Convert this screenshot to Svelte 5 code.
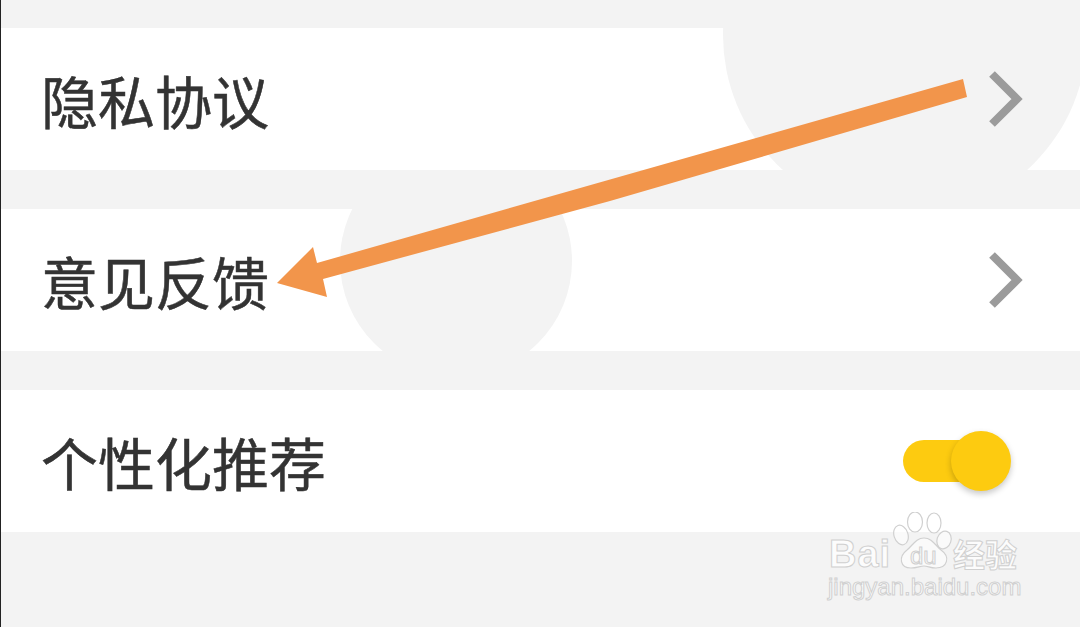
<script>
  const rows = [
    { label: '隐私协议', kind: 'link', circle: 'big' },
    { label: '意见反馈', kind: 'link', circle: 'small' },
    { label: '个性化推荐', kind: 'toggle' },
  ];
</script>

<div class="page">
  {#each rows as row}
    <div class="row">
      {#if row.circle}
        <div class="circle {row.circle}"></div>
      {/if}
      <span class="label">{row.label}</span>
      {#if row.kind === 'link'}
        <svg class="chevron" width="40" height="60" viewBox="0 0 40 60">
          <path d="M6 5 L31 30 L6 55" fill="none" stroke="#9b9b9b" stroke-width="8" />
        </svg>
      {:else}
        <div class="toggle">
          <div class="track"></div>
          <div class="knob"></div>
        </div>
      {/if}
    </div>
  {/each}

  <svg class="arrow" width="1080" height="627" viewBox="0 0 1080 627">
    <polygon fill="#f2954b" points="963,79 967,97 610,201 323,279 327,297 277,283 313,247 317,263" />
  </svg>

  <div class="mark">
    <div class="mark-top">
      <span class="bai">Bai</span>
      <div class="paw">
        <svg width="60" height="62" viewBox="0 0 60 62">
          <g fill="#fff" fill-opacity="0.6" stroke="#d0d0d0" stroke-width="1.2">
            <ellipse cx="8" cy="23" rx="7" ry="10" transform="rotate(-18 8 23)" />
            <ellipse cx="22" cy="10" rx="7.5" ry="10" />
            <ellipse cx="41" cy="11" rx="7" ry="10" />
            <ellipse cx="51" cy="28" rx="7" ry="9" transform="rotate(18 51 28)" />
            <path d="M31 26 C39 26 42 33 48 38 C58 45 54 56 43 56 C37 56 35 54 31 54 C27 54 24 56 18 56 C7 56 5 45 14 38 C20 33 23 26 31 26 Z" />
          </g>
        </svg>
        <span class="du">du</span>
      </div>
      <span class="cn">经验</span>
    </div>
    <div class="url">jingyan.baidu.com</div>
  </div>
</div>

<style>
  :global(body) {
    margin: 0;
  }

  .page {
    position: relative;
    box-sizing: border-box;
    width: 1080px;
    height: 627px;
    padding-top: 28px;
    display: flex;
    flex-direction: column;
    gap: 39px;
    overflow: hidden;
    background: #f3f3f3;
    border-left: 1px solid #222;
    font-family: "Noto Sans CJK SC", "Liberation Sans", sans-serif;
  }

  .row {
    position: relative;
    height: 142px;
    flex: none;
    display: flex;
    align-items: center;
    justify-content: space-between;
    padding: 0 56px 0 40px;
    overflow: hidden;
    background: #fff;
  }

  .circle {
    position: absolute;
    border-radius: 50%;
    background: #f3f3f3;
  }

  .circle.big {
    left: 722px;
    top: -175px;
    width: 364px;
    height: 364px;
  }

  .circle.small {
    left: 339px;
    top: -64px;
    width: 232px;
    height: 232px;
  }

  .label {
    position: relative;
    font-size: 57px;
    line-height: 1;
    color: #333;
    -webkit-text-stroke: 0.5px #333;
  }

  .chevron {
    position: relative;
    margin-right: -2px;
  }

  .toggle {
    position: relative;
    width: 108px;
    height: 60px;
    margin-right: 13px;
    display: flex;
    align-items: center;
  }

  .track {
    width: 82px;
    height: 42px;
    border-radius: 21px;
    background: #fdcb10;
  }

  .knob {
    position: absolute;
    right: 0;
    top: 0;
    width: 60px;
    height: 60px;
    border-radius: 50%;
    background: #fdcb10;
    box-shadow: 0 3px 6px rgba(0, 0, 0, 0.22);
  }

  .arrow {
    position: absolute;
    left: -1px;
    top: 0;
  }

  .mark {
    position: absolute;
    left: 825px;
    top: 512px;
    width: 200px;
    color: rgba(255, 255, 255, 0.75);
    -webkit-text-stroke: 1px #d0d0d0;
    font-family: "Liberation Sans", sans-serif;
  }

  .mark-top {
    display: flex;
    align-items: flex-end;
    height: 62px;
  }

  .bai {
    box-sizing: border-box;
    width: 67px;
    padding-left: 3px;
    font-size: 38px;
    font-weight: 700;
    line-height: 40px;
    letter-spacing: 1px;
  }

  .paw {
    position: relative;
    width: 60px;
    height: 62px;
    flex: none;
  }

  .du {
    position: absolute;
    left: 17px;
    top: 32px;
    font-size: 24px;
    line-height: 24px;
    color: transparent;
  }

  .cn {
    font-family: "Noto Sans CJK SC", sans-serif;
    font-size: 32px;
    line-height: 41px;
    font-weight: 700;
  }

  .url {
    margin-left: 2px;
    font-size: 24px;
    line-height: 26px;
    white-space: nowrap;
  }
</style>
